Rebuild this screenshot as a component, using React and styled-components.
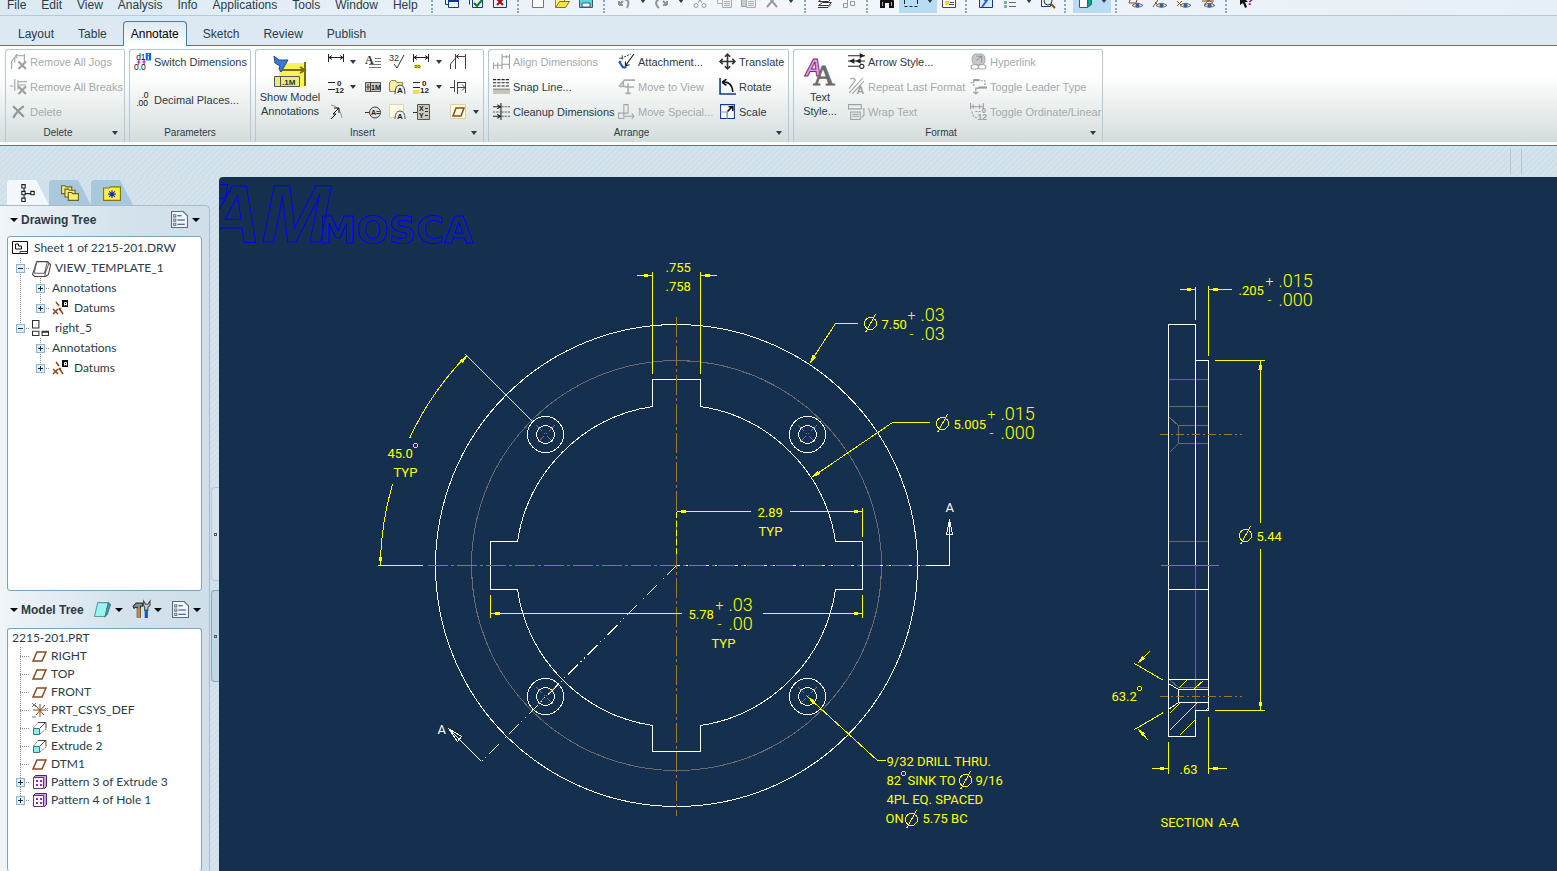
import React, { useState } from 'react';
import styled, { createGlobalStyle } from 'styled-components';

const GlobalStyle = createGlobalStyle`
  html, body {
    margin: 0;
    padding: 0;
    background: #cfdfea;
  }

  button {
    font: inherit;
    color: inherit;
    background: none;
    border: none;
    padding: 0;
    margin: 0;
    text-align: left;
    cursor: pointer;
  }
`;

const INK = '#2b3b47';
const GREY = '#8d9599';
const BROWN = '#8a4a1c';
const NAVY = '#103a8c';

/* ---------- icons ---------- */

const line = (d, stroke = INK, w = 1, extra = {}) => (
  <path d={d} fill="none" stroke={stroke} strokeWidth={w} {...extra} />
);

const eye = (
  <g>
    <path d="M4 12.5 Q9.500 8 15 12.500 Q9.500 16 4 12.500Z" fill="#dfe3e5" stroke="#666" />
    <circle cx="9.500" cy="12.500" r="2" fill="#35609c" />
  </g>
);

const ICONS = {
  // top tool bar
  window: <>{line('M1.500 4.500v7h3M4.500 7.500h10v7h-10z', NAVY)}{line('M4 8h11', NAVY, 2)}</>,
  windowCheck: <>{line('M1.500 4.500v7M4.500 3.500h10v11h-10z', NAVY)}{line('M6 10l3 3 5-6', '#0a7a1d', 2)}</>,
  windowClose: <>{line('M1.500 2.500h13v12h-13z', NAVY)}{line('M5 6l6 6M11 6l-6 6', '#a80d0d', 2)}</>,
  page: <path d="M2.500 1.500h11v13h-11z" fill="#fff" stroke="#777" />,
  open: <><path d="M1.500 14.500v-10h9v4" fill="#fff7a0" stroke="#a08a10" /><path d="M1.500 14.500l4-6h10l-4 6z" fill="#f5e14a" stroke="#8a7408" /></>,
  save: <><path d="M1.500 1.500h13v13h-13z" fill="#58d8de" stroke="#3b5a70" /><path d="M4 10h8v4h-8z" fill="#fff" stroke="#3b5a70" /></>,
  undo: <>{line('M3 12h4M3 12V8M3 12l4-4', GREY, 2)}{line('M8 6q7 1 3 9', GREY, 2)}</>,
  redo: <>{line('M13 12h-4M13 12V8M13 12l-4-4', GREY, 2)}{line('M5 6q-6 4 0 9', GREY, 2)}</>,
  cut: <>{line('M5 1l5 9M11 1l-5 9', '#999')}<circle cx="4" cy="12.500" r="2" fill="none" stroke="#999" /><circle cx="12" cy="12.500" r="2" fill="none" stroke="#999" /></>,
  copy: <>{line('M1.500 1.500h8v9h-8zM3 6.500h5', '#a8adb0')}<path d="M6.500 5.500h9v9h-9z" fill="#f1f2f3" stroke="#a8adb0" />{line('M8 8.500h6M8 10.500h6M8 12.500h6', '#a8adb0')}</>,
  paste: <><path d="M1.500 1.500h9v12h-9z" fill="#ccc" stroke="#a0a0a0" /><path d="M6.500 5.500h9v9h-9z" fill="#f1f2f3" stroke="#a8adb0" />{line('M8 8.500h6M8 10.500h6M8 12.500h6', '#a8adb0')}</>,
  remove: line('M3 14l5-6 5 6M3 2l5 6 5-6', '#999', 2),
  layers: <><path d="M1.500 12.500l4-3h9l-3 3z" fill="#fff" stroke="#333" /><path d="M1.500 8.500l4-3h9l-3 3z" fill="#fff" stroke="#333" />{line('M1 14.500h10l3-3', '#333')}</>,
  nodes: line('M2.500 10.500h4v4h-4zM9.500 8.500h4v4h-4zM6 4.500h4v-3M6.500 4.500v6', '#999'),
  find: <><path d="M1 15V8l2-5h3v4h4V3h3l2 5v7h-5v-5H6v5z" fill="#111" />{line('M3.500 9v4M12.500 9v4', '#aaa')}</>,
  select: line('M1.500 13.500h3M6.500 13.500h3M11.500 13.500h3M1.500 2v3M1.500 7v4M14.500 2v3M14.500 7v4', '#222'),
  tree: <><path d="M1.500 3.500h13v11h-13z" fill="#fff" stroke="#446" /><path d="M4 8h4v4h-4z" fill="#f5d21d" />{line('M8 11.500h5M9 9.500h4', '#446')}</>,
  sketch: <><path d="M1.500 1.500h13v13h-13z" fill="#d7e9ff" stroke={NAVY} />{line('M4 14l9-12M4 4l4 4', '#2466c9', 2)}</>,
  list2: <>{line('M7 5.500h7M7 9.500h7M7 13.500h7', '#667')}<path d="M2 4h3v3H2zM2 8h3v3H2zM2 12h3v3H2z" fill="#7fb0a8" /><circle cx="11" cy="4" r="3" fill="#2460c9" /></>,
  zoom: <><path d="M1.500 1.500h9v12h-9z" fill="#fff" stroke={NAVY} /><circle cx="8" cy="8" r="4" fill="#dfeffa" stroke="#333" />{line('M11 11l4 4', '#8a4a1c', 2)}</>,
  cube: <><path d="M2.500 2.500h8v12h-8z" fill="#fff" stroke="#555" /><path d="M10.500 2.500h4v9l-4 3z" fill="#0d9f92" stroke="#555" /></>,
  planeEye: <>{line('M1 10l3-9h7l-3 9z', BROWN)}{eye}</>,
  axisEye: <>{line('M1 14l9-13M3 9l3 3', BROWN)}{eye}</>,
  pointEye: <>{line('M1 8l5 5M6 8l-5 5M9 1l4 4M13 1l-4 4', BROWN)}{eye}</>,
  csysEye: <>{line('M2 8h12M8 2v7M3 3l10 7M13 2L4 12', BROWN)}{eye}</>,
  help: <><path d="M2 1l8 8H7l2 5-2 1-2-5-3 2z" fill="#111" /><text x="8" y="12" fontSize="13" fontWeight="700" fill="#8a1593">?</text></>,

  // ribbon
  jogs: <>{line('M1.500 15v-7l3-4M4.500 4v5M13.500 1v9M5 2.500h8M7 1l-2 2 2 2', '#9aa0a3')}{line('M8 8l7 7M15 8l-7 7', '#9aa0a3', 2)}</>,
  breaks: <>{line('M0 7.500h3M4.500 1v11M7.500 2v9M8 3.500h8M8 6.500h7', '#9aa0a3')}{line('M8 8l7 7M15 8l-7 7', '#9aa0a3', 2)}</>,
  cross: line('M3 3l10 10M13 3q-6 4-10 11', '#8f9698', 2),
  switchDim: <><text x="2" y="7" fontSize="8" fill="#111">d1</text><path d="M11 0h5v7h-5z" fill="#0d64f0" /><path d="M13 1h1v1h-1zM13 3h1v3h-1z" fill="#fff" />{line('M4.500 6v5M9.500 6v5M3 8.500h3M8 8.500h3', '#9a1fa0')}<text x="0" y="16" fontSize="8" fill="#111">0.0</text></>,
  decimal: <><text x="7" y="7" fontSize="8" fill="#111">.0</text><text x="2" y="14" fontSize="8" fill="#111">.00</text></>,
  dimH: line('M.500 0v8M15.500 0v8M1 3.500h15M4 1.500l-3 2 3 2M12 1.500l3 2-3 2', '#222'),
  ordinate: <>{line('M0 3.500h7M0 10.500h7', '#222')}<text x="9" y="7" fontSize="8" fontWeight="700" fill="#222">0</text><text x="7" y="14" fontSize="8" fontWeight="700" fill="#222">12</text></>,
  radius: <>{line('M3 1q9 1 11 13', GREY)}{line('M3 15l5-5H5l6-6M6 4h5M11 4v5', '#111')}</>,
  noteA: <><text x="0" y="10" fontSize="12" fontWeight="700" fontFamily="Liberation Serif" fill="#333">A</text>{line('M10 4.500h6M10 7.500h6M4 10.500h12M4 13.500h12', '#777')}</>,
  gtol: <><path d="M.500 3.500h15v9h-15z" fill="#c9c9c0" stroke="#555" />{line('M5.500 3v10M1 8h4M3 5v6', '#444')}<text x="6" y="11" fontSize="7" fontWeight="700" fill="#222">1M</text></>,
  balloon: <>{line('M0 8.500h5', '#333')}<circle cx="10" cy="8.500" r="5.500" fill="#e0e0d8" stroke="#444" /><text x="6" y="11" fontSize="7" fontWeight="700" fill="#222">A=</text></>,
  finish: <><text x="0" y="7" fontSize="9" fill="#333">32</text>{line('M5 10l3 4 7-13', '#333')}</>,
  symbolFolder: <><path d="M.500 3.500l2-2h4l1 2h6v9h-13z" fill="#f9efa5" stroke="#8a8a40" /><path d="M6 15q0-9 5-9t5 9" fill="#eee" stroke="#444" /><text x="8" y="14" fontSize="8" fontWeight="700" fill="#222">A</text></>,
  symbolPage: <><path d="M.500 .500h14v13h-14z" fill="#fdfbe4" stroke="#d9d6b8" /><path d="M6 15q0-8 5-8t5 8" fill="#eee" stroke="#555" /><text x="8" y="15" fontSize="8" fontWeight="700" fill="#222">A</text></>,
  dimRef: <>{line('M.500 0v8M15.500 0v8M1 3.500h15M4 1.500l-3 2 3 2M12 1.500l3 2-3 2', '#222')}<path d="M1 10h7v5H1z" fill="#fff59a" />{line('M2 11.500h2v2h-2zM5 11.500h2v2h-2z', '#8a7a10')}</>,
  ordRef: <>{line('M0 3.500h7M0 8.500h7', '#222')}<text x="9" y="7" fontSize="8" fontWeight="700" fill="#222">0</text><text x="7" y="14" fontSize="8" fontWeight="700" fill="#222">12</text><path d="M0 11h6v4H0z" fill="#f1dc4c" /></>,
  xyBox: <><path d="M4.500 .500h12v15h-12z" fill="#c9c9c0" stroke="#555" />{line('M0 8.500h4M12 4.500h3M12 7.500h3M12 11.500h3', '#333')}<text x="6" y="7" fontSize="7" fontWeight="700" fill="#222">X</text><text x="6" y="14" fontSize="7" fontWeight="700" fill="#222">Y</text></>,
  jog: line('M.500 15v-5l5-6M5.500 0v15M15.500 0v15M6 2.500h9M9 .500l-3 2 3 2', '#444'),
  brk: line('M0 8.500h4M4.500 1v12M7.500 3v12M15.500 3v11M8 8.500h7M12 5.500l3 3-3 3M8 3.500h8', '#444'),
  plane: <><path d="M.500 .500h15v14h-15z" fill="#fdfbe0" stroke="#d8d0a0" />{line('M3 12l3-8h8l-3 8z', BROWN, 1.5)}</>,
  align: line('M.500 9v6M4.500 9v6M8.500 1v14M15.500 1v14M0 11.500h8M8 3.500h8M12.500 2v3M8 10.500h8', '#9aa0a3'),
  snap: <>{line('M0 1.500h16M0 4.500h16M0 7.500h16', '#222', 1, { strokeDasharray: '3 1' })}<path d="M0 11h16v4H0z" fill="#c5c4ba" />{line('M0 10.500h16', '#777')}</>,
  cleanup: <>{line('M0 3.500h7M0 12.500h7M7.500 0v16M4 1.500l3 2-3 2M4 10.500l3 2-3 2', '#222')}{line('M8 3.500h8M8 8.500h8M8 12.500h8M0 8.500h7', '#555', 1, { strokeDasharray: '2 1' })}</>,
  attach: <>{line('M3 5l9-4M1 5h4M4 2v4', '#555', 1, { strokeDasharray: '2 1' })}{line('M15 1l-8 11M7 12V8M7 12l4-1', '#111')}{line('M1 8l4 6M5 14l3-1M1 8l2 1', '#1d56b8', 2)}</>,
  toView: line('M1 8l5-6h10M2 8h3M9.500 5v9M7 14.500h5M7 8.500h8M5 4v4h3', '#a8adaf', 1.5),
  special: line('M.500 9.500h5v5h-5zM5.500 1.500h4v8h-4zM5 12.500h10M13 10l2 2.500-2 2.500', '#a0a5a7'),
  translate: line('M8 1v14M1 8h14M5.500 3.500L8 1l2.500 2.500M5.500 12.500L8 15l2.500-2.500M3.500 5.500L1 8l2.500 2.500M12.500 5.500L15 8l-2.500 2.500', '#333', 1.5),
  rotate: <>{line('M1 0v15h15', NAVY, 1.5)}{line('M4 4q8-1 9 9M3 4l4-3M3 4l4 3', '#111', 1.5)}</>,
  scale: <><path d="M1.500 1.500h13v13h-13z" fill="#fff" stroke={NAVY} />{line('M1.500 8.500h6v6M8 14.500v-6', '#7da0d0')}{line('M8 8l5-5M9 3.500h4v4', '#111', 1.5)}</>,
  arrows: <>{line('M0 2.500h16M0 7.500h16M0 12.500h11', '#222')}<path d="M11 0l5 2.500-5 2.500zM6 5L1 7.500 6 10zM12 5L7 7.500l5 2.500z" fill="#222" /><circle cx="13" cy="12.500" r="2" fill="#fff" stroke="#222" /></>,
  repeat: <>{line('M2 1l3-1 2 2-6 8M1 14L14 0M4 15L15 3', '#9aa0a3')}<text x="8" y="15" fontSize="10" fontWeight="700" fill="#9aa0a3">A</text></>,
  wrap: line('M.500 1.500h12v4h-12zM2.500 8.500h9v7h-9zM4 10.500h6M4 12.500h6M14 5.500h1v6l-2 2', '#9aa0a3'),
  link: <><rect x="2" y="1" width="12" height="10" rx="4" fill="#c8caca" stroke="#a5a9aa" />{line('M6 7l5-4M6 3h5v6', '#8f9495')}<rect x="1" y="11" width="7" height="4" rx="2" fill="none" stroke="#a5a9aa" /><rect x="8" y="11" width="7" height="4" rx="2" fill="none" stroke="#a5a9aa" /></>,
  leader: <>{line('M3.500 2.500v6M.500 4.500h3', '#999', 1, { strokeDasharray: '2 1' })}{line('M3 2h6', '#999', 2)}{line('M10 2.500h4v5', '#999', 1, { strokeDasharray: '2 1' })}{line('M8 9h8', '#999', 2)}{line('M5.500 9.500h3M5.500 9v6M3 13l2.500 2L8 13', '#999')}</>,
  ordLin: <>{line('M.500 0v6M12.500 0v6M1 3.500h11M3 1.500v4M9 1.500v4', '#9aa0a3')}{line('M2 8q0 5 5 6M5 8h6', '#9aa0a3', 1, { strokeDasharray: '2 1' })}<text x="11" y="9" fontSize="7" fontWeight="700" fill="#9aa0a3">0</text><text x="7" y="16" fontSize="8" fontWeight="700" fill="#9aa0a3">12</text></>,

  // navigator
  hierarchy: line('M2.500 .500h3v3h-3zM2.500 6.500h3v3h-3zM2.500 12.500h3v3h-3zM10.500 6.500h3v3h-3zM4.500 4v2M4.500 10v2M6 8.500h4', '#222'),
  folders: <>{[0, 3, 6].map((o) => <path key={o} d={`M${o + .5} ${o + 1.5}h3l1 1h5v6h-9z`} fill="#f8ec6d" stroke="#6b6424" />)}</>,
  favorite: <><path d="M.500 3.500h5l1-1h9v12h-15z" fill="#fbf04a" stroke="#837611" />{line('M8 5.500v7M4.500 9h7M5.500 6.500l5 5M10.500 6.500l-5 5', '#1222d0')}</>,
  listPage: <><path d="M.500 .500h11l4 4v11h-15z" fill="#f1f6fb" stroke="#606a72" />{line('M6 4.500h4M6 8.500h7M6 12.500h7', '#1d3f8f')}<path d="M2.500 3.500h2v2h-2zM2.500 7.500h2v2h-2zM2.500 11.500h2v2h-2z" fill="#fff" stroke="#6b7c88" /></>,
  solid: <><path d="M3.500 1.500h10l-2 9-1 4h-10z" fill="#9df3f0" stroke="#5a9ba2" /><path d="M13.500 1.500l2 2-3 9-2 2z" fill="#3f9fa6" stroke="#3f7f88" /></>,
  tools: <><path d="M0 5l3-3h6v3H7v10H4V6H2l-1 1z" fill="#8a8f94" stroke="#333" /><path d="M4 7h3v8H4z" fill="#c98a3c" /><path d="M10 0v4l1 2v3h3V6l2-2V0l-2 3h-2z" fill="#c5ced6" stroke="#444" /><path d="M11 8h3v8h-3z" fill="#1c55c8" /></>,
  sheet: <><path d="M.500 1.500h15v12h-15z" fill="#fff" stroke="#111" />{line('M3.500 4v5h6v-3h-3v-2z', '#111')}{line('M8 13.500v-2h8', '#1222d0')}</>,
  view: <><path d="M4.500 1.500h10l3 3-2 9-3 2h-10l-2-2 1-3z" fill="#fff" stroke="#444" />{line('M4.500 1.500l-2 9v2h9l1-3 2-8M12 15l1-4 3-8', '#666')}</>,
  views: line('M.500 .500h6v7h-6zM.500 10.500h6v4h-6zM9.500 10.500h6v4h-6zM9 11.500h7', '#333'),
  datums: <>{line('M4 2l3 4M7 8l4 6M1 9l5 5M6 9l-5 5M9 8l-2 2', BROWN, 1.5)}<path d="M10 0h6v7h-6z" fill="#111" />{line('M12.500 5.500v-3h2v3M13 4.500h1', '#fff')}</>,
  datumPlane: line('M1 13l4-9h9l-4 9z', BROWN, 1.5),
  csys: <>{line('M1 8h12M8 2v13M3 3l9 10M13 3L4 13', BROWN)}{line('M0 1l4 4M4 1L0 5M0 15h4M13 6l3 3M16 6l-3 3', '#777')}</>,
  extrude: <><path d="M1.500 8.500h6v6h-6z" fill="#7ff3f0" stroke="#4c6f73" />{line('M1.500 8l5-6M8 14l6-5', '#777', 1, { strokeDasharray: '2 1' })}{line('M6 2.500h8v6M13 3L8 8', '#444')}</>,
  pattern: <><path d="M1.500 3.500l2-2h11v11l-2 2z" fill="#c9a3e2" stroke="#4a2a5e" /><path d="M1.500 3.500h10v11h-10z" fill="#fff" stroke="#5a3a6e" /><path d="M4 6h2v2H4zM8 6h2v2H8zM4 10h2v2H4zM8 10h2v2H8z" fill="#a020c8" /></>,
};

const Glyph = styled.svg`
  flex: none;
  display: block;
  overflow: visible;
  font-family: 'Liberation Sans', Arial, sans-serif;
`;

const Icon = ({ name, size = 16 }) => (
  <Glyph width={size} height={size} viewBox="0 0 16 16" aria-hidden="true">
    {ICONS[name]}
  </Glyph>
);

const Caret = styled.span`
  flex: none;
  width: 0;
  height: 0;
  border: ${(p) => (p.$big ? 4 : 3)}px solid transparent;
  border-top: 4px solid ${(p) => (p.$big ? '#000' : '#2b3b47')};
  border-bottom: 0;
`;

/* ---------- data ---------- */

const MENUS = ['File', 'Edit', 'View', 'Analysis', 'Info', 'Applications', 'Tools', 'Window', 'Help'];

// '-' stands for a small drop-down arrow, '*' marks a pressed tool
const TOOL_GROUPS = [
  { width: 86, tools: ['window', 'windowCheck', 'windowClose'] },
  { width: 86, tools: ['page', 'open', 'save'] },
  { width: 201, tools: ['undo', '-', 'redo', '-', 'cut', 'copy', 'paste', 'remove', '-'] },
  { width: 62, tools: ['layers', 'nodes'] },
  { width: 99, tools: ['find', '*select', '*-', 'tree'] },
  { width: 99, tools: ['sketch', 'list2', '-', 'zoom'] },
  { width: 51, tools: ['*cube', '*-'] },
  { width: 110, tools: ['planeEye', 'axisEye', 'pointEye', 'csysEye'] },
  { width: 40, tools: ['help'] },
];

const TABS = ['Layout', 'Table', 'Annotate', 'Sketch', 'Review', 'Publish'];

const INSERT = [
  'dimH', '-', 'noteA', 'finish', 'dimRef', '-', 'jog', '',
  'ordinate', '-', 'gtol', 'symbolFolder', 'ordRef', '-', 'brk', '',
  'radius', '', 'balloon', 'symbolPage', 'xyBox', '', 'plane', '-',
];

const DRAWING_TREE = [
  { guides: [], icon: 'sheet', label: 'Sheet 1 of 2215-201.DRW' },
  { guides: ['minus'], icon: 'view', label: 'VIEW_TEMPLATE_1', big: true },
  { guides: ['pass', 'plus'], label: 'Annotations' },
  { guides: ['pass', 'plusEnd'], icon: 'datums', label: 'Datums' },
  { guides: ['minusEnd'], icon: 'views', label: 'right_5', big: true },
  { guides: ['none', 'plus'], label: 'Annotations' },
  { guides: ['none', 'plusEnd'], icon: 'datums', label: 'Datums' },
];

const MODEL_TREE = [
  { guides: [], label: '2215-201.PRT' },
  { guides: ['tee'], icon: 'datumPlane', label: 'RIGHT' },
  { guides: ['tee'], icon: 'datumPlane', label: 'TOP' },
  { guides: ['tee'], icon: 'datumPlane', label: 'FRONT' },
  { guides: ['tee'], icon: 'csys', label: 'PRT_CSYS_DEF' },
  { guides: ['tee'], icon: 'extrude', label: 'Extrude 1' },
  { guides: ['tee'], icon: 'extrude', label: 'Extrude 2' },
  { guides: ['tee'], icon: 'datumPlane', label: 'DTM1' },
  { guides: ['plus'], icon: 'pattern', label: 'Pattern 3 of Extrude 3' },
  { guides: ['plusEnd'], icon: 'pattern', label: 'Pattern 4 of Hole 1' },
];

/* ---------- parts ---------- */

const Command = ({ icon, children, disabled }) => (
  <CommandButton disabled={disabled}>
    <Icon name={icon} size={17} />
    {children}
  </CommandButton>
);

const Guide = ({ kind, height }) => {
  const mid = height / 2;
  const hasBox = kind.startsWith('plus') || kind.startsWith('minus');
  const bottom = kind.endsWith('End') ? mid : height;
  const art = (
    <Glyph width="20" height={height} shapeRendering="crispEdges" aria-hidden="true">
      {kind !== 'none' && <path d={`M10.500 0V${bottom}`} stroke="#8b8b8b" strokeDasharray="1 1" />}
      {kind !== 'none' && kind !== 'pass' && <path d={`M10 ${mid + .5}H20`} stroke="#8b8b8b" strokeDasharray="1 1" />}
      {hasBox && (
        <>
          <rect x="6.500" y={mid - 3.5} width="8" height="8" rx="1" fill="#dff0fa" stroke="#8db5cf" />
          <path d={`M8 ${mid + .5}h5${kind.startsWith('plus') ? `M10.500 ${mid - 2}v5` : ''}`} stroke="#1b2c3c" />
        </>
      )}
    </Glyph>
  );
  return hasBox ? <button aria-label="Toggle branch">{art}</button> : art;
};

const Tree = ({ rows, rowHeight }) => (
  <TreeList>
    {rows.map((row, index) => (
      <TreeRow key={index} $height={rowHeight}>
        {row.guides.map((kind, i) => <Guide key={i} kind={kind} height={rowHeight} />)}
        <TreeLabel $gap={row.big || row.guides.length !== 1 ? 6 : 3}>
          {row.icon && <Icon name={row.icon} size={row.big ? 17 : 16} />}
          {row.label}
        </TreeLabel>
      </TreeRow>
    ))}
  </TreeList>
);

/* ---------- drawing sheet ---------- */

const Arrow = ({ x, y, turn = 0, color = '#ff0' }) => (
  <path d="M0 0L-9 -2V2Z" fill={color} transform={`translate(${x} ${y}) rotate(${turn})`} />
);

const Tolerance = ({ x, y, upper, lower }) => (
  <>
    <Tol x={x} y={y + 2} $sign>+</Tol>
    <Tol x={x + 13} y={y + 3}>{upper}</Tol>
    <Tol x={x + 2} y={y + 21} $sign>-</Tol>
    <Tol x={x + 13} y={y + 22}>{lower}</Tol>
  </>
);

const Diameter = ({ x, y }) => (
  <g>
    <circle cx={x} cy={y} r="6" />
    <path d={`M${x - 5} ${y + 9}L${x + 5} ${y - 9}`} />
  </g>
);

const Hole = ({ x, y }) => (
  <g>
    <path d={`M${x - 9} ${y - 9}l18 18M${x + 9} ${y - 9}l-18 18`} stroke="#a0762f" strokeDasharray="8 3 1 3" />
    <circle cx={x} cy={y} r="18" stroke="#fff" />
    <circle cx={x} cy={y} r="9" stroke="#fff" />
  </g>
);

const Sheet = () => (
  <SheetSvg role="img" aria-label="Flange drawing 2215-201" shapeRendering="crispEdges">
    <g transform="translate(-218.500 -176.500)" fill="none" strokeWidth="1">
      {/* company mark */}
      <path d="M219 184H227L225 198H219" stroke="#00f" />
      <MarkText x="202" y="241" fontSize="82" fontStyle="italic" $plain>AM</MarkText>
      <MarkText x="318" y="242" fontSize="38">MOSCA</MarkText>

      {/* front view */}
      <g stroke="#6c6a6a">
        <circle cx="676" cy="565" r="205" />
      </g>
      <g stroke="#fff">
        <circle cx="676" cy="565" r="241" />
        <path d="M652 406V379H700V406A161 161 0 0 1 835 541H862V589H835A161 161 0 0 1 700 725V751H652V725A161 161 0 0 1 517 589H490V541H517A161 161 0 0 1 652 406" />
        <path d="M676 565L481 761" strokeDasharray="14 4 1 4 1 4" />
        <path d="M925 565H949V519M949 519l-3 15h6zM481 761L448 728M448 728l13 8-4 5z" />
      </g>
      <Hole x={545} y={434} />
      <Hole x={807} y={434} />
      <Hole x={545} y={696} />
      <Hole x={807} y={696} />
      <g stroke="#a0762f">
        <path d="M427 565H925" strokeDasharray="20 3 3 3" />
        <path d="M676 316V815" strokeDasharray="20 3 3 3" />
      </g>
      <path d="M676 565H925" stroke="#fff" strokeDasharray="3 6 2 18" />

      {/* front view dimensions */}
      <g stroke="#ff0">
        <path d="M652 271V373M700 271V373M636 275H652M700 275H716" />
        <path d="M809 363L835 323H857M811 477L892 422H929" />
        <path d="M466 355A297 297 0 0 0 409 438M392 484A297 297 0 0 0 380 565M465 354L532 421M377 565H422" />
        <path d="M676 511H750M789 511H862M862 507V536" />
        <path d="M676 511V556" strokeDasharray="6 3" />
        <path d="M490 613H681M762 613H862M490 594V617M862 594V617" />
        <path d="M807 696L877 760H885" />
        <circle cx="415" cy="445" r="2" />
        <circle cx="903" cy="773" r="2" />
        <Diameter x={870} y={323} />
        <Diameter x={942} y={423} />
        <Diameter x={965} y={780} />
        <Diameter x={911} y={819} />
      </g>
      <Arrow x={652} y={275} />
      <Arrow x={700} y={275} turn={180} />
      <Arrow x={809} y={363} turn={123} />
      <Arrow x={811} y={477} turn={146} />
      <Arrow x={467} y={355} turn={-45} />
      <Arrow x={380} y={565} turn={90} />
      <Arrow x={676} y={511} turn={180} />
      <Arrow x={862} y={511} />
      <Arrow x={490} y={613} turn={180} />
      <Arrow x={862} y={613} />
      <Arrow x={807} y={696} turn={223} />

      <Cad x="665" y="271">.755</Cad>
      <Cad x="665" y="290">.758</Cad>
      <Cad x="881" y="328">7.50</Cad>
      <Tolerance x={907} y={317} upper=".03" lower=".03" />
      <Cad x="953" y="428">5.005</Cad>
      <Tolerance x={987} y={416} upper=".015" lower=".000" />
      <Cad x="387" y="457">45.0</Cad>
      <Cad x="393" y="476">TYP</Cad>
      <Cad x="757" y="516">2.89</Cad>
      <Cad x="758" y="535">TYP</Cad>
      <Cad x="688" y="618">5.78</Cad>
      <Tolerance x={715} y={607} upper=".03" lower=".00" />
      <Cad x="711" y="647">TYP</Cad>
      <Cad x="886" y="765">9/32 DRILL THRU.</Cad>
      <Cad x="886" y="784">82</Cad>
      <Cad x="907" y="784">SINK TO</Cad>
      <Cad x="975" y="784">9/16</Cad>
      <Cad x="886" y="803">4PL EQ. SPACED</Cad>
      <Cad x="885" y="822">ON</Cad>
      <Cad x="922" y="822">5.75 BC</Cad>
      <Cad x="945" y="511" $white>A</Cad>
      <Cad x="437" y="733" $white>A</Cad>

      {/* section view */}
      <g stroke="#6c6a6a">
        <path d="M1168 379H1208M1168 406H1208M1168 541H1208M1195 565V710" />
        <path d="M1169 417L1178 425H1208M1178 425V443H1208M1178 443L1169 452M1170 680L1178 687H1208" />
      </g>
      <g stroke="#fff">
        <path d="M1195 565V324H1168V736H1195V710H1208V360H1195M1168 589H1208M1168 679H1208" />
        <path d="M1168 683L1178 689H1208M1178 689V702H1208M1178 702L1168 709" />
      </g>
      <g stroke="#a0762f">
        <path d="M1159 434H1241M1159 696H1241" strokeDasharray="8 3 2 3" />
        <path d="M1160 565H1218" />
      </g>
      <g stroke="#ff0">
        <path d="M1178 688L1186 680M1194 688L1203 680M1169 713L1179 703M1169 730L1196 703M1179 735L1195 719M1205 710L1208 707" />
        <path d="M1195 286V319M1208 285V355M1179 289H1195M1208 289H1231" />
        <path d="M1214 360H1264M1214 710H1264M1260 360V522M1260 548V710" />
        <path d="M1134 663L1163 680M1149 651L1138 662M1134 729L1163 712M1138 729L1148 740" />
        <path d="M1168 741V773M1208 716V773M1151 768H1168M1208 768H1226" />
        <circle cx="1139" cy="688" r="2" />
        <Diameter x={1245} y={535} />
      </g>
      <Arrow x={1195} y={289} />
      <Arrow x={1208} y={289} turn={180} />
      <Arrow x={1260} y={360} turn={-90} />
      <Arrow x={1260} y={710} turn={90} />
      <Arrow x={1137} y={663} turn={135} />
      <Arrow x={1137} y={728} turn={225} />
      <Arrow x={1168} y={768} />
      <Arrow x={1208} y={768} turn={180} />

      <Cad x="1238" y="294">.205</Cad>
      <Tolerance x={1265} y={283} upper=".015" lower=".000" />
      <Cad x="1256" y="540">5.44</Cad>
      <Cad x="1111" y="700">63.2</Cad>
      <Cad x="1179" y="773">.63</Cad>
      <Cad x="1160" y="826">SECTION</Cad>
      <Cad x="1218" y="826">A-A</Cad>
    </g>
  </SheetSvg>
);

const App = () => {
  const [tab, setTab] = useState('Annotate');

  return (
    <Window>
      <GlobalStyle />
      <MenuBar>
        <Menus>
          {MENUS.map((name) => <MenuButton key={name}>{name}</MenuButton>)}
        </Menus>
        {TOOL_GROUPS.map((group, index) => (
          <ToolGroup key={index} $width={group.width}>
            {group.tools.map((tool, i) => {
              const name = tool.replace('*', '');
              return (
                <Tool key={i} $pressed={tool.startsWith('*')} $narrow={name === '-'} aria-label={name === '-' ? 'more' : name}>
                  {name === '-' ? <Caret /> : <Icon name={name} />}
                </Tool>
              );
            })}
          </ToolGroup>
        ))}
      </MenuBar>

      <TabBar role="tablist">
        {TABS.map((name) => (
          <RibbonTab key={name} role="tab" aria-selected={tab === name} $active={tab === name} onClick={() => setTab(name)}>
            {name}
          </RibbonTab>
        ))}
      </TabBar>

      <Ribbon>
        <Group $width={120}>
          <Commands>
            <Command icon="jogs" disabled>Remove All Jogs</Command>
            <Command icon="breaks" disabled>Remove All Breaks</Command>
            <Command icon="cross" disabled>Delete</Command>
          </Commands>
          <GroupName $more>Delete<More aria-label="More delete"><Caret /></More></GroupName>
        </Group>
        <Group $width={122}>
          <Commands $gap={13}>
            <Command icon="switchDim">Switch Dimensions</Command>
            <Command icon="decimal">Decimal Places...</Command>
          </Commands>
          <GroupName>Parameters</GroupName>
        </Group>
        <Group $width={229}>
          <Columns>
            <BigButton $width={60}>
              <Glyph width="34" height="32" viewBox="0 0 34 32" aria-hidden="true">
                <path d="M6 15L14 7H32V31H22V22H6Z" fill="#fbf25a" />
                <path d="M8 14h23M27 11l5 3-5 3M32 6v24" fill="none" stroke="#77700c" strokeWidth="2" />
                <path d="M1.500 20.500h25v10h-25zM7.500 20v10" fill="#ece97e" stroke="#555" />
                <text x="9" y="29" fontSize="8" fontWeight="700" fill="#333">.1M</text>
                <path d="M1 0l5 4h9l-7 12-2-3 1-3-5-3z" fill="#3f78cf" stroke="#1c4a92" />
              </Glyph>
              <span>Show Model</span>
              <span>Annotations</span>
            </BigButton>
            <IconGrid>
              {INSERT.map((name, i) => {
                if (!name) return <span key={i} />;
                return (
                  <GridButton key={i} aria-label={name === '-' ? 'more' : name}>
                    {name === '-' ? <Caret /> : <Icon name={name} />}
                  </GridButton>
                );
              })}
            </IconGrid>
          </Columns>
          <GroupName $more>Insert<More aria-label="More insert"><Caret /></More></GroupName>
        </Group>
        <Group $width={301}>
          <Columns>
            <Commands $width={125}>
              <Command icon="align" disabled>Align Dimensions</Command>
              <Command icon="snap">Snap Line...</Command>
              <Command icon="cleanup">Cleanup Dimensions</Command>
            </Commands>
            <Commands $width={101}>
              <Command icon="attach">Attachment...</Command>
              <Command icon="toView" disabled>Move to View</Command>
              <Command icon="special" disabled>Move Special...</Command>
            </Commands>
            <Commands>
              <Command icon="translate">Translate</Command>
              <Command icon="rotate">Rotate</Command>
              <Command icon="scale">Scale</Command>
            </Commands>
          </Columns>
          <GroupName $more>Arrange<More aria-label="More arrange"><Caret /></More></GroupName>
        </Group>
        <Group $width={310}>
          <Columns>
            <BigButton $width={44}>
              <Glyph width="32" height="32" viewBox="0 0 32 32" aria-hidden="true">
                <text x="1" y="20" fontSize="23" fontStyle="italic" fontWeight="700" fill="#d9a9dc" stroke="#8a1593">A</text>
                <text x="9" y="29" fontSize="30" fontFamily="Liberation Serif" fill="#6b6b6b" stroke="#6b6b6b">A</text>
              </Glyph>
              <span>Text</span>
              <span>Style...</span>
            </BigButton>
            <Commands $width={122}>
              <Command icon="arrows">Arrow Style...</Command>
              <Command icon="repeat" disabled>Repeat Last Format</Command>
              <Command icon="wrap" disabled>Wrap Text</Command>
            </Commands>
            <Commands>
              <Command icon="link" disabled>Hyperlink</Command>
              <Command icon="leader" disabled>Toggle Leader Type</Command>
              <Command icon="ordLin" disabled>Toggle Ordinate/Linear</Command>
            </Commands>
          </Columns>
          <GroupName $more>Format<More aria-label="More format"><Caret /></More></GroupName>
        </Group>
      </Ribbon>

      <MessageStrip><Grip /></MessageStrip>

      <Body>
        <Navigator>
          <NavTabs>
            {['hierarchy', 'folders', 'favorite'].map((name, i) => (
              <NavTab key={name} $active={i === 0} aria-label={name}>
                <Icon name={name} size={18} />
              </NavTab>
            ))}
          </NavTabs>
          <NavPanel>
            <NavMain>
              <TreeHeader>
                <TreeTitle><Caret $big />Drawing Tree</TreeTitle>
                <HeaderTool aria-label="Settings"><Icon name="listPage" size={17} /><Caret $big /></HeaderTool>
              </TreeHeader>
              <TreeBox $fixed><Tree rows={DRAWING_TREE} rowHeight={20} /></TreeBox>
              <TreeHeader>
                <TreeTitle><Caret $big />Model Tree</TreeTitle>
                <HeaderTool aria-label="Show"><Icon name="solid" size={17} /><Caret $big /></HeaderTool>
                <HeaderTool aria-label="Tools"><Icon name="tools" size={17} /><Caret $big /></HeaderTool>
                <HeaderTool aria-label="Settings"><Icon name="listPage" size={17} /><Caret $big /></HeaderTool>
              </TreeHeader>
              <TreeBox><Tree rows={MODEL_TREE} rowHeight={18} /></TreeBox>
            </NavMain>
            <Sash>
              <SashHandle aria-label="Collapse tree" />
              <SashHandle aria-label="Collapse navigator" $strong />
            </Sash>
          </NavPanel>
        </Navigator>
        <Canvas><Sheet /></Canvas>
      </Body>
    </Window>
  );
};

export default App;

/* ---------- styles ---------- */

const stripes = 'repeating-linear-gradient(135deg, #cfdfea 0 2px, #d5e3ed 2px 4px)';

const Window = styled.div`
  display: flex;
  flex-direction: column;
  min-height: 100vh;
  font: 12px/14px 'Liberation Sans', Arial, sans-serif;
  color: #2b3b47;
`;

const MenuBar = styled.div`
  display: flex;
  align-items: flex-end;
  height: 13px;
  padding: 0 0 2px;
  overflow: hidden;
  background: linear-gradient(90deg, #dbe9f3, #f3f7fb 50%, #e6eff6);
  border-bottom: 1px solid #b4cad9;
`;

const Menus = styled.nav`
  display: flex;
  gap: 1px;
  width: 431px;
  flex: none;
`;

const MenuButton = styled.button`
  height: 16px;
  padding: 0 7px;
`;

const ToolGroup = styled.div`
  display: flex;
  flex: none;
  box-sizing: border-box;
  width: ${(p) => p.$width}px;
  padding-left: 7px;
  border-left: 2px dotted #8ba6bd;
`;

const Tool = styled.button`
  display: flex;
  align-items: center;
  justify-content: center;
  width: ${(p) => (p.$narrow ? 14 : 24)}px;
  height: 24px;
  background: ${(p) => (p.$pressed ? '#b9dcf5' : 'none')};
`;

const TabBar = styled.div`
  display: flex;
  align-items: flex-end;
  gap: 8px;
  height: 29px;
  padding-left: 10px;
  background: #dce9f2;
  border-bottom: 1px solid #4c7ba0;
`;

const RibbonTab = styled.button`
  box-sizing: border-box;
  height: 25px;
  margin-bottom: -1px;
  padding: 0 7px 1px;
  border: 1px solid ${(p) => (p.$active ? '#4c7ba0' : 'transparent')};
  border-bottom: 0;
  border-radius: 4px 4px 0 0;
  background: ${(p) => (p.$active ? 'linear-gradient(#dce9f2, #fff)' : 'none')};
  color: ${(p) => (p.$active ? '#000' : '#2b3b47')};
`;

const Ribbon = styled.div`
  display: flex;
  gap: 4px;
  padding: 3px 5px 0;
  background: linear-gradient(#fff 30%, #d4dddc);
  border-bottom: 3px solid #fff;
`;

const Group = styled.section`
  box-sizing: border-box;
  flex: none;
  width: ${(p) => p.$width}px;
  padding: 0 5px 1px;
  box-shadow: inset 1px 1px #b3c9d8, inset -1px 0 #b3c9d8;
  border-radius: 3px 3px 0 0;
  font-size: 11px;
`;

const Columns = styled.div`
  display: flex;
`;

const Commands = styled.div`
  display: flex;
  flex-direction: column;
  align-items: flex-start;
  flex: none;
  gap: ${(p) => p.$gap || 0}px;
  width: ${(p) => (p.$width ? `${p.$width}px` : 'auto')};
  height: 75px;
  white-space: nowrap;
`;

const CommandButton = styled.button`
  display: flex;
  align-items: center;
  gap: 3px;
  height: 25px;

  &:disabled {
    color: #a3abaf;
    cursor: default;
  }
`;

const BigButton = styled.button`
  display: flex;
  flex-direction: column;
  align-items: center;
  flex: none;
  width: ${(p) => p.$width}px;
  margin-right: 6px;
  padding-top: 7px;
  white-space: nowrap;

  svg {
    margin-bottom: 2px;
  }
`;

const IconGrid = styled.div`
  display: grid;
  grid-template-columns: 18px 16px 24px 24px 24px 12px 26px 10px;
  grid-auto-rows: 25px;
  padding-left: 1px;
`;

const GridButton = styled.button`
  display: flex;
  align-items: center;
  justify-content: center;
`;

const GroupName = styled.div`
  position: relative;
  font-size: 10px;
  line-height: 17px;
  text-align: center;
  padding-right: ${(p) => (p.$more ? 14 : 0)}px;
`;

const More = styled.button`
  position: absolute;
  right: 2px;
  top: 7px;
  line-height: 4px;
  display: flex;
`;

const MessageStrip = styled.div`
  display: flex;
  justify-content: flex-end;
  height: 25px;
  padding: 3px 35px 3px 0;
  border-top: 1px solid #4c7ba0;
  background: ${stripes};
`;

const Grip = styled.div`
  width: 10px;
  border: 1px solid #b1c8d8;
  border-width: 0 1px;
`;

const Body = styled.div`
  display: flex;
  flex: 1;
`;

const Navigator = styled.aside`
  display: flex;
  flex-direction: column;
  flex: none;
  width: 219px;
  background: ${stripes};
`;

const NavTabs = styled.div`
  display: flex;
  padding: 3px 0 0 7px;
`;

const NavTab = styled.button`
  display: flex;
  align-items: center;
  justify-content: center;
  width: 42px;
  height: 25px;
  clip-path: polygon(0 2px, 2px 0, 29px 0, 42px 100%, 0 100%);
  background: ${(p) => (p.$active ? '#f4f8fb' : '#a9c8dd')};
`;

const NavPanel = styled.div`
  display: flex;
  flex: 1;
`;

const NavMain = styled.div`
  display: flex;
  flex-direction: column;
  box-sizing: border-box;
  width: 210px;
  padding: 0 7px;
  border: 1px solid #a9bccb;
  border-width: 1px 1px 0 0;
  border-radius: 0 5px 0 0;
  background: linear-gradient(90deg, #f0f5f9, #d3e2ec 60%, #cfdfea);
`;

const TreeHeader = styled.div`
  display: flex;
  align-items: center;
  gap: 10px;
  box-sizing: border-box;
  height: 30px;
  padding: 0 2px 3px 3px;

  & ~ & {
    height: 37px;
    padding-bottom: 0;
  }
`;

const TreeTitle = styled.h2`
  display: flex;
  align-items: center;
  gap: 3px;
  flex: 1;
  margin: 0;
  font-size: 12px;
  line-height: 14px;
  white-space: nowrap;
`;

const HeaderTool = styled.button`
  display: flex;
  align-items: center;
  gap: 4px;
`;

const TreeBox = styled.div`
  box-sizing: border-box;
  flex: ${(p) => (p.$fixed ? '0 0 355px' : '1')};
  padding-top: ${(p) => (p.$fixed ? 1 : 0)}px;
  border: 1px solid #7ba3bf;
  border-bottom-width: ${(p) => (p.$fixed ? 1 : 0)}px;
  border-radius: 3px;
  background: #fff;
`;

const TreeList = styled.ul`
  list-style: none;
  margin: 0;
  padding: 0 0 0 2px;
  font: 12px/16px Lato, 'Noto Sans', sans-serif;
`;

const TreeRow = styled.li`
  display: flex;
  align-items: center;
  height: ${(p) => p.$height}px;

  button {
    display: block;
  }
`;

const TreeLabel = styled.span`
  display: flex;
  align-items: center;
  gap: ${(p) => p.$gap}px;
  padding-left: 2px;
  white-space: nowrap;
`;

const Sash = styled.div`
  display: flex;
  flex-direction: column;
  gap: 9px;
  padding: 282px 0 0 1px;
`;

const SashHandle = styled.button`
  display: flex;
  align-items: center;
  justify-content: center;
  box-sizing: border-box;
  width: 8px;
  height: ${(p) => (p.$strong ? 92 : 94)}px;
  border: 1px solid ${(p) => (p.$strong ? '#8ba7bb' : '#b4c9d8')};
  border-right: 0;
  border-radius: 4px 0 0 4px;
  background: ${(p) => (p.$strong ? '#c3d6e2' : '#d5e3ed')};

  &::after {
    content: '';
    width: 1px;
    height: 1px;
    border: 1px solid #4a5a66;
  }
`;

const Canvas = styled.main`
  flex: 1;
  min-width: 0;
  overflow: hidden;
  background: #15304e;
  border-top-left-radius: 4px;
`;

const SheetSvg = styled.svg`
  display: block;
  width: 100%;
  height: 100%;
  min-height: 694px;
`;

const Cad = styled.text`
  font: 13px Roboto, 'Liberation Sans', sans-serif;
  fill: ${(p) => (p.$white ? '#fff' : '#ff0')};
`;

const Tol = styled.text`
  font: 300 ${(p) => (p.$sign ? 14 : 18)}px Roboto, 'Liberation Sans', sans-serif;
  fill: #ff0;
`;

const MarkText = styled.text`
  font-family: ${(p) => (p.$plain ? "'Liberation Sans'" : "'DejaVu Sans'")}, sans-serif;
  font-weight: 700;
  fill: none;
  stroke: #00f;
`;
